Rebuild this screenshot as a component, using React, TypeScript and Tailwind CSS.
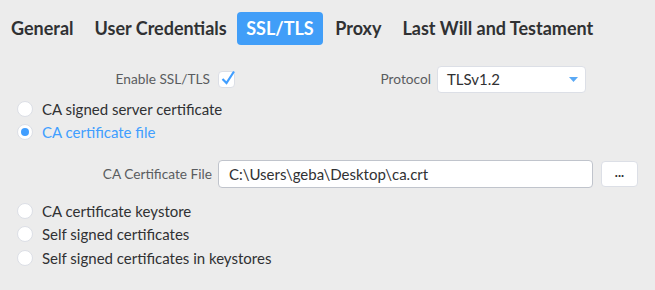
import React from "react";

const tabs = ["General", "User Credentials", "SSL/TLS", "Proxy", "Last Will and Testament"];

type RadioProps = {
	label: string;
	checked?: boolean;
};

const Radio: React.FC<RadioProps> = ({ label, checked }) => (
	<div className="flex items-center pl-[17px] h-[23.5px]">
		<span className="w-4 h-4 rounded-full bg-white border border-[#dcdfe6] flex items-center justify-center">
			{checked && <span className="w-2 h-2 rounded-full bg-[#409eff]" />}
		</span>
		<span className={`ml-[9px] text-[15px] ${checked ? "text-[#409eff]" : "text-[#303133]"}`}>{label}</span>
	</div>
);

export default function App() {
	return (
		<div className="w-[655px] h-[290px] bg-[#ececec] font-['Lato',sans-serif] overflow-hidden">
			{/* tabs */}
			<div className="flex items-center pt-3 pl-[2px]">
				{tabs.map(tab => (
					<div
						key={tab}
						className={`h-[33px] flex items-center rounded text-[18px] font-bold mr-[3px] ${tab === "SSL/TLS" ? "bg-[#419ef8] text-white px-[9.5px] -ml-[2px]" : "text-[#303133] px-[9px]"}`}
					>
						{tab}
					</div>
				))}
			</div>

			{/* enable + protocol */}
			<div className="flex items-center h-[27px] mt-[21px]">
				<div className="w-[431px] flex items-center justify-between">
					<div className="flex items-center">
						<span className="w-[210px] text-right text-[13.7px] text-[#5a5c60]">Enable SSL/TLS</span>
						<span className="ml-2 w-[17px] h-[17px] bg-white border border-[#dcdfe6] rounded-sm relative">
							<svg className="absolute -top-[3px] left-[1px]" width="16" height="18" viewBox="0 0 16 18">
								<path d="M2.5 10 L6.5 14 L14 2.5" fill="none" stroke="#409eff" strokeWidth="2.2" />
							</svg>
						</span>
					</div>
					<span className="text-[13.7px] text-[#5a5c60]">Protocol</span>
				</div>
				<div className="ml-[6px] w-[149px] h-[27px] bg-white border border-[#dcdfe6] rounded flex items-center justify-between pl-[9px] pr-[7px]">
					<span className="text-[15px] text-[#303133]">TLSv1.2</span>
					<svg width="9" height="5" viewBox="0 0 9 5">
						<path d="M0 0 H9 L4.5 5 Z" fill="#5aa9f5" />
					</svg>
				</div>
			</div>

			<div className="mt-1">
				<Radio label="CA signed server certificate" />
				<Radio label="CA certificate file" checked />
			</div>

			{/* certificate file */}
			<div className="flex items-center h-[28px] mt-4">
				<span className="w-[212px] text-right text-[13.7px] text-[#5a5c60]">CA Certificate File</span>
				<div className="ml-[6px] w-[375px] h-[28px] bg-white border border-[#c0c4cc] rounded flex items-center pl-[10px]">
					<span className="text-[15px] text-[#303133]">C:\Users\geba\Desktop\ca.crt</span>
				</div>
				<button className="ml-2 w-[37px] h-[26px] bg-white border border-[#dcdfe6] rounded text-[13px] font-bold text-[#303133] leading-none pb-1">
					...
				</button>
			</div>

			<div className="mt-[11px]">
				<Radio label="CA certificate keystore" />
				<Radio label="Self signed certificates" />
				<Radio label="Self signed certificates in keystores" />
			</div>
		</div>
	);
}
